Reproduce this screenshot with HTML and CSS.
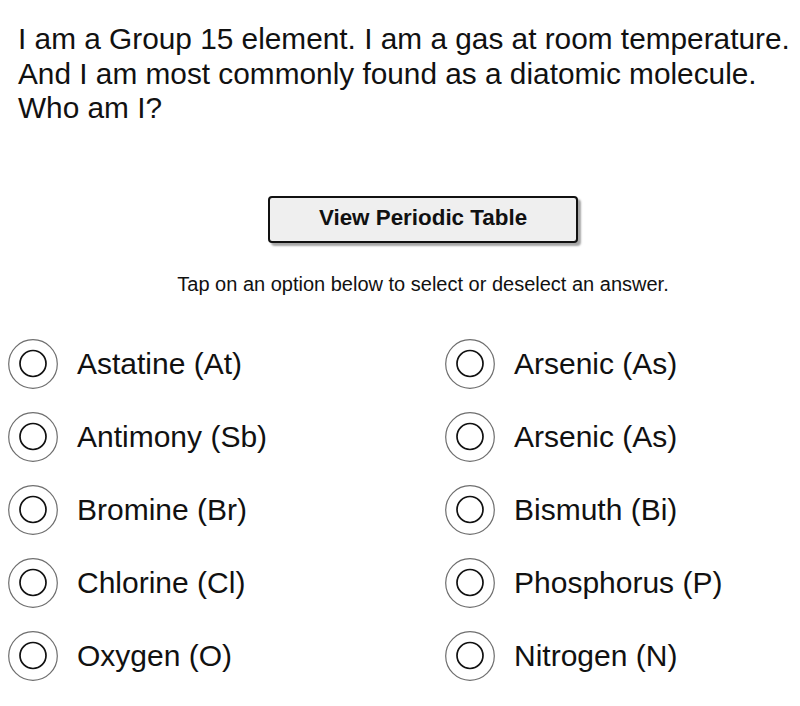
FILE: index.html
```html
<!DOCTYPE html>
<html>
<head>
<meta charset="utf-8">
<link rel="stylesheet" href="styles.css">
</head>
<body>
<div class="page">
  <p class="question">I am a Group 15 element. I am a gas at room temperature.<br>And I am most commonly found as a diatomic molecule.<br>Who am I?</p>
  <div class="center">
    <button class="pt-btn">View Periodic Table</button>
    <p class="hint">Tap on an option below to select or deselect an answer.</p>
  </div>
  <div class="options">
    <div class="opt"><svg class="radio" viewBox="0 0 50 50"><circle cx="25" cy="25" r="24.3" class="outer"/><circle cx="25" cy="24.5" r="13" class="inner"/></svg><span>Astatine (At)</span></div>
    <div class="opt"><svg class="radio" viewBox="0 0 50 50"><circle cx="25" cy="25" r="24.3" class="outer"/><circle cx="25" cy="24.5" r="13" class="inner"/></svg><span>Arsenic (As)</span></div>
    <div class="opt"><svg class="radio" viewBox="0 0 50 50"><circle cx="25" cy="25" r="24.3" class="outer"/><circle cx="25" cy="24.5" r="13" class="inner"/></svg><span>Antimony (Sb)</span></div>
    <div class="opt"><svg class="radio" viewBox="0 0 50 50"><circle cx="25" cy="25" r="24.3" class="outer"/><circle cx="25" cy="24.5" r="13" class="inner"/></svg><span>Arsenic (As)</span></div>
    <div class="opt"><svg class="radio" viewBox="0 0 50 50"><circle cx="25" cy="25" r="24.3" class="outer"/><circle cx="25" cy="24.5" r="13" class="inner"/></svg><span>Bromine (Br)</span></div>
    <div class="opt"><svg class="radio" viewBox="0 0 50 50"><circle cx="25" cy="25" r="24.3" class="outer"/><circle cx="25" cy="24.5" r="13" class="inner"/></svg><span>Bismuth (Bi)</span></div>
    <div class="opt"><svg class="radio" viewBox="0 0 50 50"><circle cx="25" cy="25" r="24.3" class="outer"/><circle cx="25" cy="24.5" r="13" class="inner"/></svg><span>Chlorine (Cl)</span></div>
    <div class="opt"><svg class="radio" viewBox="0 0 50 50"><circle cx="25" cy="25" r="24.3" class="outer"/><circle cx="25" cy="24.5" r="13" class="inner"/></svg><span>Phosphorus (P)</span></div>
    <div class="opt"><svg class="radio" viewBox="0 0 50 50"><circle cx="25" cy="25" r="24.3" class="outer"/><circle cx="25" cy="24.5" r="13" class="inner"/></svg><span>Oxygen (O)</span></div>
    <div class="opt"><svg class="radio" viewBox="0 0 50 50"><circle cx="25" cy="25" r="24.3" class="outer"/><circle cx="25" cy="24.5" r="13" class="inner"/></svg><span>Nitrogen (N)</span></div>
  </div>
</div>
</body>
</html>
```

FILE: styles.css
```css
html, body {
  margin: 0;
  padding: 0;
  background: #fff;
  overflow: hidden;
}
body {
  font-family: "Liberation Sans", Arial, Helvetica, sans-serif;
  color: #111;
}
.page {
  width: 800px;
}
.question {
  margin: 0;
  padding: 22px 0 0 18px;
  font-size: 29.8px;
  line-height: 34.5px;
  white-space: nowrap;
}
.center {
  padding-left: 46px;
  text-align: center;
}
.pt-btn {
  display: block;
  margin: 70.5px auto 0;
  width: 310px;
  height: 47px;
  box-sizing: border-box;
  border: 2px solid #111;
  border-radius: 4px;
  background: #efefef;
  box-shadow: 3px 3px 2px rgba(0,0,0,0.35);
  font-family: "Liberation Sans", Arial, sans-serif;
  font-weight: bold;
  font-size: 22.4px;
  color: #111;
  padding: 0 0 4px;
}
.hint {
  margin: 29px 0 0;
  font-size: 20px;
  line-height: 24px;
}
.options {
  margin-top: 43px;
  padding-left: 8px;
  display: grid;
  grid-template-columns: 437px 1fr;
  row-gap: 23px;
}
.opt {
  display: flex;
  align-items: center;
  gap: 19px;
  height: 50px;
  font-size: 30px;
}
.opt span {
  padding-bottom: 1px;
}
.radio {
  width: 50px;
  height: 50px;
  flex: none;
}
.radio .outer {
  fill: none;
  stroke: #6e6e6e;
  stroke-width: 1.2;
}
.radio .inner {
  fill: none;
  stroke: #111;
  stroke-width: 1.7;
}
```
